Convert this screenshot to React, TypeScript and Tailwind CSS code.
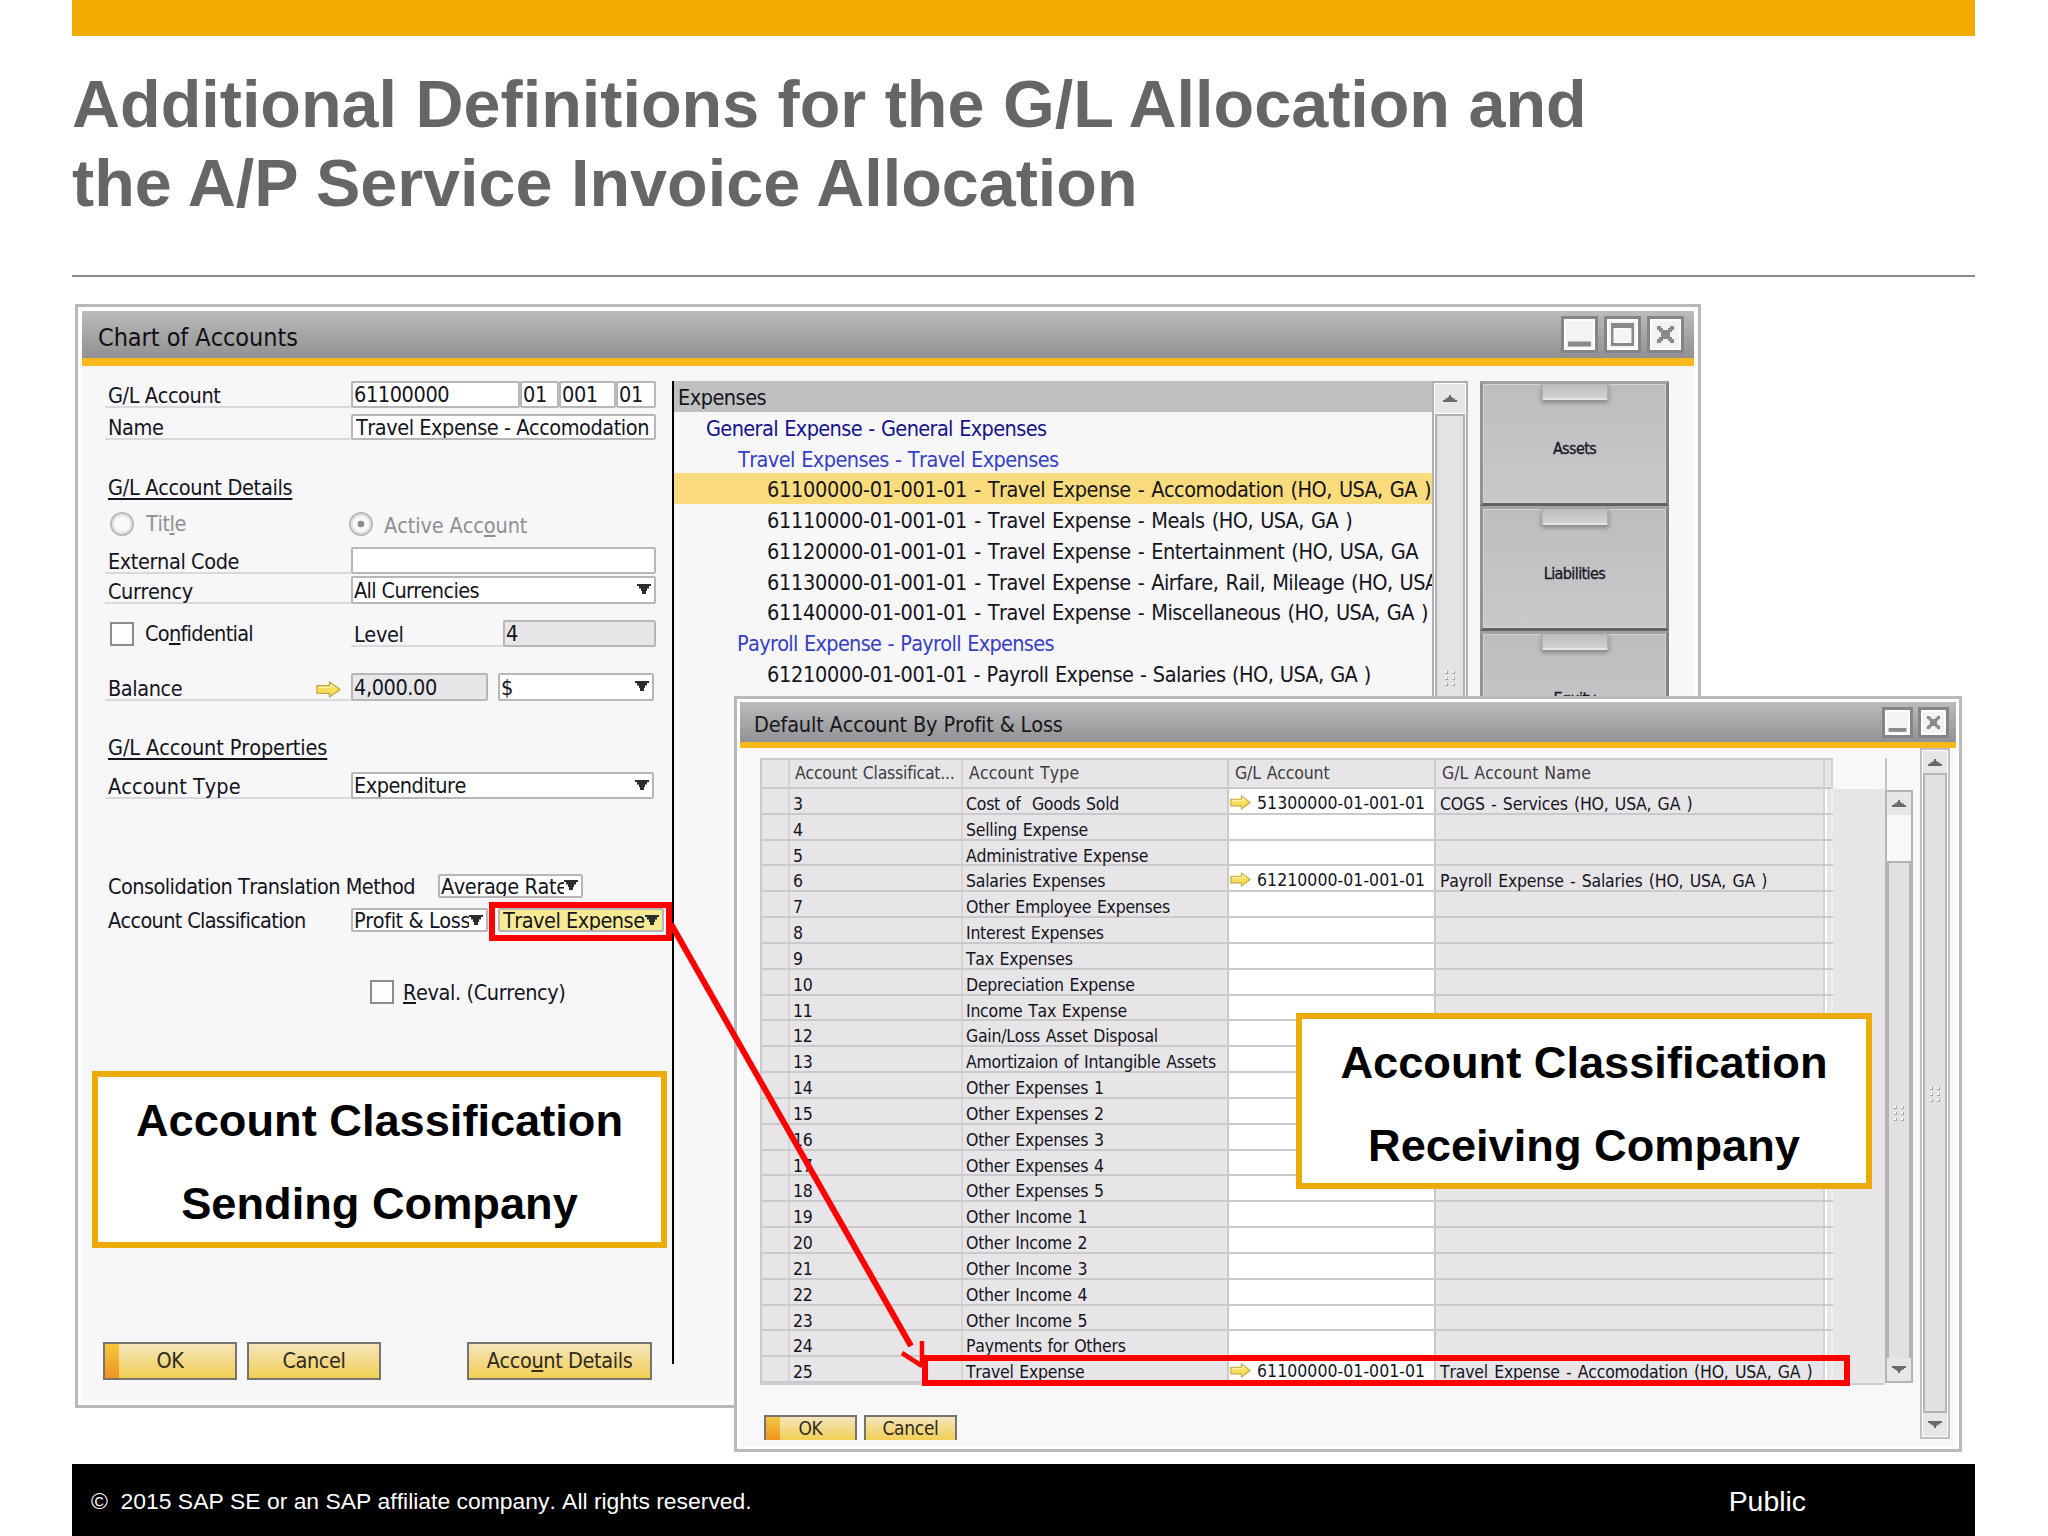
import type { ReactNode } from "react";
import clsx from "clsx";

const accounts = [
  { text: "Travel Expense - Accomodation (HO, USA, GA )", code: "61100000-01-001-01", selected: true },
  { text: "Travel Expense - Meals (HO, USA, GA )", code: "61110000-01-001-01" },
  { text: "Travel Expense - Entertainment (HO, USA, GA", code: "61120000-01-001-01" },
  { text: "Travel Expense - Airfare, Rail, Mileage (HO, USA", code: "61130000-01-001-01" },
  { text: "Travel Expense - Miscellaneous (HO, USA, GA )", code: "61140000-01-001-01" },
];

type ClassRow = { id: number; type: string; account?: string; name?: string };

const rows: ClassRow[] = [
  { id: 3, type: "Cost of  Goods Sold", account: "51300000-01-001-01", name: "COGS - Services (HO, USA, GA )" },
  { id: 4, type: "Selling Expense" },
  { id: 5, type: "Administrative Expense" },
  { id: 6, type: "Salaries Expenses", account: "61210000-01-001-01", name: "Payroll Expense - Salaries (HO, USA, GA )" },
  { id: 7, type: "Other Employee Expenses" },
  { id: 8, type: "Interest Expenses" },
  { id: 9, type: "Tax Expenses" },
  { id: 10, type: "Depreciation Expense" },
  { id: 11, type: "Income Tax Expense" },
  { id: 12, type: "Gain/Loss Asset Disposal" },
  { id: 13, type: "Amortizaion of Intangible Assets" },
  { id: 14, type: "Other Expenses 1" },
  { id: 15, type: "Other Expenses 2" },
  { id: 16, type: "Other Expenses 3" },
  { id: 17, type: "Other Expenses 4" },
  { id: 18, type: "Other Expenses 5" },
  { id: 19, type: "Other Income 1" },
  { id: 20, type: "Other Income 2" },
  { id: 21, type: "Other Income 3" },
  { id: 22, type: "Other Income 4" },
  { id: 23, type: "Other Income 5" },
  { id: 24, type: "Payments for Others" },
  { id: 25, type: "Travel Expense", account: "61100000-01-001-01", name: "Travel Expense - Accomodation (HO, USA, GA )" },
];

function LinkArrow({ className }: { className?: string }) {
  return (
    <svg viewBox="0 0 26 18" preserveAspectRatio="none" className={className}>
      <path d="M1 5h13V1l11 8-11 8v-4H1z" fill="#f6de5c" stroke="#c9a63c" strokeWidth="1.3" strokeLinejoin="round" />
      <path d="M2.5 6.7h13V4l4 3.2" fill="none" stroke="#fdf3a8" strokeWidth="1.4" />
    </svg>
  );
}

function Caret() {
  return (
    <svg viewBox="0 0 14 10" className="mb-[2px] h-[10px] w-[14px] shrink-0">
      <path d="M0 0h14v2h-2v2.500h-2v2.500H9v3H5V7H4V4.500H2V2H0z" fill="#2b2b30" />
    </svg>
  );
}

function ScrollArrow({ down }: { down?: boolean }) {
  return (
    <svg viewBox="0 0 14 7" className={clsx("h-[7px] w-[14px]", down && "rotate-180")}>
      <path d="M0 7V5h2V3.500h2.500V2H6V0h2v2h1.500v1.500H12V5h2v2z" fill="#6a6a6c" />
    </svg>
  );
}

function Grip() {
  return (
    <div className="grid h-[15px] grid-cols-2 content-start gap-x-[4px] gap-y-[3px]">
      {Array.from({ length: 6 }, (_, i) => (
        <span key={i} className="size-[3px] border-r border-b border-[#a8a8aa] bg-white" />
      ))}
    </div>
  );
}

function TitleButton({ kind, small }: { kind: "min" | "max" | "close"; small?: boolean }) {
  return (
    <div
      className={clsx(
        "border-[3px] border-[#858486] bg-white p-[2px]",
        small ? "h-[31px] w-[31px]" : "h-[37px] w-[37px]",
      )}
    >
      <svg viewBox="0 0 27 27" preserveAspectRatio="none" className="h-full w-full bg-[#f4f2f4]">
        {kind === "min" && <path d="M2 20.500h23v5H2z" fill="#8a898b" />}
        {kind === "max" && (
          <>
            <path d="M2 2h23v23H2z" fill="#8a898b" />
            <path d="M5 7.500h17v14H5z" fill="#f6f4f6" stroke="#fff" strokeWidth="1" />
          </>
        )}
        {kind === "close" && (
          <path
            d="M5 5h4v2h2v2h5V7h2V5h4v4h-2v2h-2v5h2v2h2v4h-4v-2h-2v-2h-5v2H9v2H5v-4h2v-2h2v-5H7V9H5z"
            fill="#8a898b"
          />
        )}
      </svg>
    </div>
  );
}

function Field({ children, className, caret }: { children?: ReactNode; className?: string; caret?: boolean }) {
  return (
    <div
      className={clsx(
        "flex h-full shrink-0 items-center justify-between overflow-hidden rounded-[2px] border-2 border-[#b7b7b9] pr-[3px] pl-[1px]",
        className,
      )}
    >
      <span className="min-w-0 flex-1 overflow-hidden pt-[1px] leading-[26px]">{children}</span>
      {caret && <Caret />}
    </div>
  );
}

function Label({ children, className }: { children: ReactNode; className?: string }) {
  return (
    <div className={clsx("flex h-full items-end border-b-2 border-[#d6dadd] pl-[3px] leading-[20px]", className)}>
      <span>{children}</span>
    </div>
  );
}

function Check() {
  return <span className="h-[24px] w-[24px] shrink-0 border-2 border-[#8c8c90] bg-[#fdfdfd]" />;
}

function Radio({ on }: { on?: boolean }) {
  return (
    <svg viewBox="0 0 26 26" className="size-[26px] shrink-0">
      <circle cx="13" cy="13" r="11" fill="#f9f8fa" stroke="#b9b9bb" strokeWidth="2" />
      <circle cx="13" cy="13" r="8.800" fill="none" stroke="#e2e2e4" strokeWidth="1.500" />
      {on && <circle cx="13" cy="13" r="3.300" fill="#8a8a8c" />}
    </svg>
  );
}

function Button({ children, className, primary }: { children: ReactNode; className?: string; primary?: boolean }) {
  return (
    <div
      className={clsx(
        "flex border-2 border-[#77746e] bg-linear-to-b from-[#f5e6bd] via-[#f3d987] to-[#f2cf52] text-[#2e2a1e]",
        className,
      )}
    >
      {primary && <span className="w-[14px] shrink-0 bg-linear-to-b from-[#f3c93f] to-[#ee9322]" />}
      <span className={clsx("flex flex-1 items-center justify-center", primary && "pr-[14px]")}>{children}</span>
    </div>
  );
}

function Drawer({ label }: { label: string }) {
  return (
    <div className="flex h-[125px] shrink-0 flex-col items-center border-[3px] border-t-[#a2a2a4] border-r-[#828284] border-b-[#626264] border-l-[#939395] bg-linear-to-b from-[#bdbdbf] to-[#c9c9cb] shadow-[inset_0_0_0_1px_#d4d4d6]">
      <span className="h-[16px] w-[68px] rounded-b-[4px] border-x-2 border-b-2 border-[#aeaeb0] border-b-[#e6e6e8] bg-linear-to-b from-[#bcbcbe] to-[#d2d2d4] shadow-[0_3px_4px_0_#88888a]" />
      <span className="mt-[37px] text-[16px] leading-[24px] tracking-[-0.600px] text-[#15151f] [-webkit-text-stroke:0.3px_#15151f]">
        {label}
      </span>
    </div>
  );
}

function Callout({ lines, className }: { lines: string[]; className?: string }) {
  return (
    <div
      className={clsx(
        "absolute flex flex-col items-center border-[6px] border-[#edab08] bg-white pt-[2px] font-['Liberation_Sans',sans-serif] text-[45.200px] leading-[83px] font-bold whitespace-pre text-black",
        className,
      )}
    >
      {lines.map((line) => (
        <span key={line}>{line}</span>
      ))}
    </div>
  );
}

function AccountForm() {
  return (
    <div className="flex w-[551px] flex-col">
      <div className="flex h-[27px]">
        <Label className="w-[246px]">G/L Account</Label>
        <Field className="w-[169px] bg-white">61100000</Field>
        <Field className="w-[39px] bg-white">01</Field>
        <Field className="w-[57px] bg-white">001</Field>
        <Field className="w-[40px] bg-white">01</Field>
      </div>
      <div className="mt-[6px] flex h-[26px]">
        <Label className="w-[246px]">Name</Label>
        <Field className="flex-1 bg-white pl-[3px] tracking-[-0.450px]">Travel Expense - Accomodation</Field>
      </div>
      <div className="mt-[36px] pl-[3px] leading-[24px] tracking-[-0.300px] underline decoration-2 underline-offset-[3px] [text-decoration-skip-ink:none]">
        G/L Account Details
      </div>
      <div className="mt-[11px] flex h-[26px] items-center pl-[4px] text-[#8f8f93]">
        <Radio />
        <span className="ml-[11px] w-[202px]">
          Tit<u>l</u>e
        </span>
        <Radio on />
        <span className="ml-[10px] pt-[4px] tracking-[-0.100px]">
          Active Acc<u>o</u>unt
        </span>
      </div>
      <div className="mt-[10px] flex h-[27px]">
        <Label className="w-[246px] leading-[16px]">External Code</Label>
        <Field className="w-[305px] bg-white" />
      </div>
      <div className="mt-[2px] flex h-[28px]">
        <Label className="w-[246px] leading-[18px]">Currency</Label>
        <Field className="w-[305px] bg-white tracking-[-0.650px]" caret>
          All Currencies
        </Field>
      </div>
      <div className="mt-[16px] flex h-[27px] items-center">
        <div className="flex w-[246px] items-center pl-[5px]">
          <Check />
          <span className="ml-[11px] pt-[2px] tracking-[-0.700px]">
            Co<u>n</u>fidential
          </span>
        </div>
        <Label className="w-[152px] leading-[16px]">Level</Label>
        <Field className="w-[153px] bg-[#e7e6e8]">4</Field>
      </div>
      <div className="mt-[26px] flex h-[28px]">
        <Label className="w-[246px]">
          <span className="flex w-[233px] items-center justify-between">
            Balance <LinkArrow className="h-[17px] w-[25px]" />
          </span>
        </Label>
        <Field className="w-[137px] bg-[#e7e6e8]">4,000.00</Field>
        <Field className="ml-[10px] w-[156px] bg-white" caret>
          $
        </Field>
      </div>
      <div className="mt-[35px] pl-[3px] leading-[24px] tracking-[-0.100px] underline decoration-2 underline-offset-[3px] [text-decoration-skip-ink:none]">
        G/L Account Properties
      </div>
      <div className="mt-[12px] flex h-[27px]">
        <Label className="w-[246px] tracking-[0.050px]">Account Type</Label>
        <Field className="w-[303px] bg-white tracking-[-0.500px]" caret>
          Expenditure
        </Field>
      </div>
      <div className="mt-[75px] flex h-[24px] items-center pl-[3px]">
        <span className="w-[330px] pt-[3px] tracking-[-0.550px]">Consolidation Translation Method</span>
        <Field className="w-[145px] bg-white" caret>
          Average Rate
        </Field>
      </div>
      <div className="mt-[10px] flex h-[24px] items-center">
        <span className="w-[246px] shrink-0 pt-[3px] pl-[3px] tracking-[-0.680px]">Account Classification</span>
        <Field className="w-[137px] bg-white pt-[1px]" caret>
          Profit &amp; Loss
        </Field>
        <Field className="ml-[10px] w-[166px] bg-[#f8e995] pt-[1px] pl-[3px] tracking-[-0.500px]" caret>
          Travel Expense
        </Field>
      </div>
      <div className="mt-[48px] flex h-[24px] items-center pl-[265px]">
        <Check />
        <span className="ml-[9px] pt-[3px]">
          <u>R</u>eval. (Currency)
        </span>
      </div>
      <div className="mt-[338px] -ml-[2px] flex h-[38px]">
        <Button primary className="w-[134px]">
          OK
        </Button>
        <Button className="ml-[10px] w-[134px]">Cancel</Button>
        <Button className="ml-[86px] w-[185px]">
          Acco<u>u</u>nt Details
        </Button>
      </div>
    </div>
  );
}

function ChartOfAccounts() {
  return (
    <section className="absolute top-[304px] left-[75px] flex h-[1104px] w-[1626px] flex-col border-[3px] border-[#b9b9bb] bg-white p-[4px] text-[21.500px] tracking-[-0.400px] text-[#14141c]">
      <header className="flex h-[47px] items-center justify-between bg-linear-to-b from-[#bcbcbc] to-[#929090] pr-[10px] pl-[16px]">
        <h2 className="pt-[7px] text-[25px] tracking-[-0.050px] text-[#101014]">Chart of Accounts</h2>
        <div className="flex gap-[6px]">
          <TitleButton kind="min" />
          <TitleButton kind="max" />
          <TitleButton kind="close" />
        </div>
      </header>
      <div className="h-[8px] shrink-0 bg-[#f9b81c]" />
      <div className="flex min-h-0 flex-1 bg-[#f7f6f8] pt-[15px] pl-[23px]">
        <AccountForm />
        <div className="ml-[16px] h-[983px] w-[2px] bg-black" />
        <div className="flex w-[758px] flex-col overflow-hidden leading-[27.750px] tracking-[-0.500px] [word-spacing:0.800px] *:pt-[3px]">
          <div className="bg-[#c0c0c0] pl-[4px]">Expenses</div>
          <div className="pl-[32px] tracking-[-0.620px] text-[#12128c]">General Expense - General Expenses</div>
          <div className="pl-[64px] tracking-[-0.580px] text-[#3340c4]">Travel Expenses - Travel Expenses</div>
          {accounts.map((a) => (
            <div key={a.code} className={clsx("pl-[93px] [word-spacing:1.400px]", a.selected && "bg-[#fbdc7c]")}>
              <span className="tracking-[-0.300px]">{a.code}</span> - {a.text}
            </div>
          ))}
          <div className="pl-[63px] tracking-[-0.680px] text-[#3340c4]">Payroll Expense - Payroll Expenses</div>
          <div className="pl-[93px]">
            <span className="tracking-[-0.300px]">61210000-01-001-01</span> - Payroll Expense - Salaries (HO, USA, GA )
          </div>
        </div>
        <div className="flex h-[983px] w-[36px] flex-col border-2 border-[#b0b0b2] bg-white p-px">
          <div className="flex h-[29px] items-center justify-center bg-[#e6e5e7]">
            <ScrollArrow />
          </div>
          <div className="mt-px flex flex-1 items-start justify-center border-2 border-[#b0b0b2] bg-[#e3e2e4] pt-[255px]">
            <Grip />
          </div>
        </div>
        <div className="ml-[12px] flex w-[189px] flex-col">
          <Drawer label="Assets" />
          <Drawer label="Liabilities" />
          <Drawer label="Equity" />
        </div>
      </div>
    </section>
  );
}

function ClassificationTable() {
  return (
    <div className="flex h-[627px] w-[1125px] flex-col text-[17.500px] tracking-[-0.250px] [word-spacing:1px]">
      <div className="flex h-[33px] w-[1073px] border-t-2 border-b-2 border-l-2 border-[#c9c8ca] bg-[#e7e5e7] pb-[1px] leading-[26px] text-[#3c3c42]">
        <span className="w-[28px] border-r-2 border-[#d2d1d3]" />
        <span className="w-[173px] border-r-2 border-[#d2d1d3] pl-[5px]">Account Classificat...</span>
        <span className="w-[266px] border-r-2 border-[#c9c8ca] pl-[6px] tracking-[0.150px]">Account Type</span>
        <span className="w-[207px] border-r-2 border-[#c9c8ca] pl-[6px] tracking-[-0.150px]">G/L Account</span>
        <span className="w-[389px] border-r-2 border-[#d2d1d3] pl-[6px] tracking-[0.020px]">G/L Account Name</span>
        <span className="flex-1 border-r-2 border-[#d2d1d3]" />
      </div>
      <div className="flex flex-1 border-b-2 border-[#cfced0] bg-[#e7e5e8]">
        <div className="w-[1073px]">
          {rows.map((r) => (
            <div key={r.id} className="flex h-[25.830px] border-b-2 border-l-2 border-[#cac9cb] leading-[31px]">
              <span className="w-[28px] border-r-2 border-[#d4d3d5]" />
              <span className="w-[173px] border-r-2 border-[#d4d3d5] pl-[3px]">{r.id}</span>
              <span className="w-[266px] border-r-2 border-[#cac9cb] pl-[3px]">{r.type}</span>
              <span className="flex w-[207px] items-center border-r-2 border-[#cac9cb] bg-white pt-[5px] pl-[1px] tracking-[0.050px]">
                {r.account && (
                  <>
                    <LinkArrow className="mr-[6px] mb-[2px] h-[15px] w-[21px]" />
                    {r.account}
                  </>
                )}
              </span>
              <span className="w-[389px] border-r-2 border-[#d4d3d5] pl-[4px] tracking-[-0.200px] [word-spacing:1.500px]">
                {r.name}
              </span>
              <span className="flex-1 border-x-2 border-l-white border-r-[#efeef0]" />
            </div>
          ))}
        </div>
      </div>
    </div>
  );
}

function DefaultAccounts() {
  return (
    <section className="absolute top-[696px] left-[734px] flex h-[756px] w-[1228px] flex-col border-[3px] border-[#b9b9bb] bg-white px-[3px] pt-[3px] pb-[3px] text-[#14141c]">
      <header className="flex h-[40px] items-center justify-between bg-linear-to-b from-[#bcbbbd] to-[#929193] pr-[7px] pl-[14px]">
        <h2 className="pt-[7px] text-[21.500px] tracking-[-0.150px] text-[#17171c]">Default Account By Profit &amp; Loss</h2>
        <div className="flex gap-[5px]">
          <TitleButton kind="min" small />
          <TitleButton kind="close" small />
        </div>
      </header>
      <div className="h-[6px] shrink-0 bg-[#f9b81c]" />
      <div className="flex flex-1 bg-[#f8f7f9] pl-[20px]">
        <div className="flex w-[1125px] flex-col pt-[10px]">
          <ClassificationTable />
          <div className="mt-[30px] ml-[4px] flex h-[25px] gap-[7px] text-[19px] tracking-[-0.300px]">
            <Button primary className="w-[93px] border-b-0">
              OK
            </Button>
            <Button className="w-[93px] border-b-0">Cancel</Button>
          </div>
        </div>
        <div className="flex h-[635px] w-[28px] flex-col pt-[10px]">
          <div className="h-[32px] border-l-2 border-[#c4c3c5]" />
          <div className="flex flex-1 flex-col border-2 border-[#b4b3b5] bg-[#f8f7f9]">
            <div className="flex h-[23px] items-center justify-center bg-[#e6e5e7]">
              <ScrollArrow />
            </div>
            <div className="mt-[46px] flex flex-1 items-start justify-center border-2 border-b-0 border-[#b4b3b5] bg-[#e1e0e3] pt-[243px]">
              <Grip />
            </div>
            <div className="flex h-[23px] items-center justify-center bg-[#e6e5e7]">
              <ScrollArrow down />
            </div>
          </div>
        </div>
        <div className="ml-[7px] flex h-[691px] w-[30px] flex-col border-2 border-[#c0bfc1] bg-white p-px">
          <div className="flex h-[22px] items-center justify-center bg-[#e6e5e7]">
            <ScrollArrow />
          </div>
          <div className="flex flex-1 items-start justify-center border-2 border-[#b4b3b5] bg-[#e1e0e3] pt-[312px]">
            <Grip />
          </div>
          <div className="flex h-[23px] items-center justify-center bg-[#e6e5e7]">
            <ScrollArrow down />
          </div>
        </div>
      </div>
    </section>
  );
}

export default function App() {
  return (
    <main className="relative flex h-[1536px] w-[2048px] flex-col overflow-hidden bg-white px-[72px] pr-[73px] font-['DejaVu_Sans_Condensed','DejaVu_Sans',sans-serif] whitespace-pre [font-kerning:none]">
      <div className="h-[36px] shrink-0 bg-[#f2ab00]" />
      <h1 className="mt-[29px] h-[212px] border-b-2 border-[#8b8b8b] font-['Liberation_Sans',sans-serif] text-[66.500px] leading-[79.300px] font-bold text-[#666666] [font-kerning:normal]">
        Additional Definitions for the G/L Allocation and{"\n"}the A/P Service Invoice Allocation
      </h1>

      <ChartOfAccounts />
      <DefaultAccounts />

      <Callout
        className="top-[1071px] left-[92px] h-[177px] w-[575px]"
        lines={["Account Classification", "Sending Company"]}
      />
      <Callout
        className="top-[1013px] left-[1296px] h-[176px] w-[576px]"
        lines={["Account Classification", "Receiving Company"]}
      />

      <div className="absolute top-[902px] left-[489px] h-[39px] w-[183px] border-[6px] border-[#fe0000]" />
      <div className="absolute top-[1355px] left-[922px] h-[31px] w-[928px] border-[6px] border-[#fe0000]" />
      <svg viewBox="660 900 300 480" className="absolute top-[900px] left-[660px] h-[480px] w-[300px]">
        <path d="M671 924 911 1346" stroke="#fe0000" strokeWidth="6" />
        <path d="M902 1353 922 1366M922 1341v26" stroke="#fe0000" strokeWidth="4.500" />
      </svg>

      <footer className="mt-auto flex h-[72px] items-center justify-between bg-black pr-[169px] pl-[19px] font-['Liberation_Sans',sans-serif] text-white">
        <span className="pt-[3px] text-[22.900px]">©  2015 SAP SE or an SAP affiliate company. All rights reserved.</span>
        <span className="pt-[3px] text-[28.400px]">Public</span>
      </footer>
    </main>
  );
}
